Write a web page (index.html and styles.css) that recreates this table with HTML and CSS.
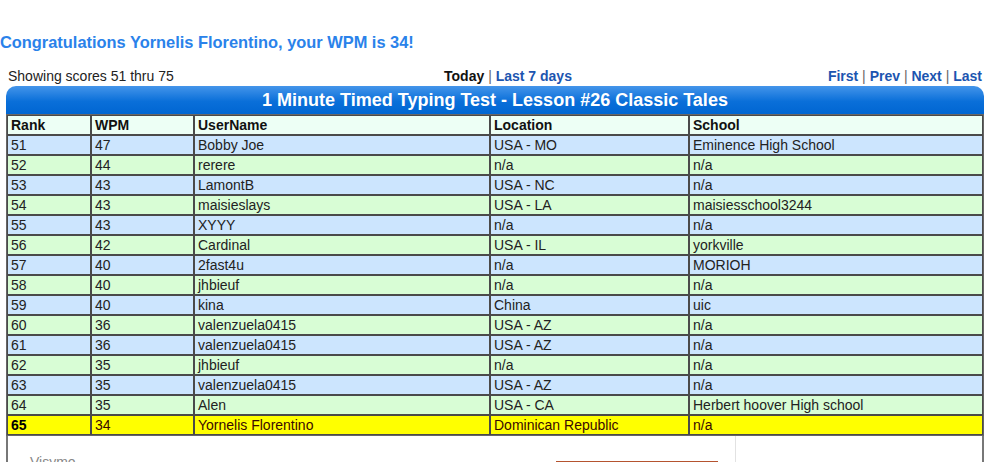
FILE: index.html
```html
<!DOCTYPE html>
<html>
<head>
<meta charset="utf-8">
<link rel="stylesheet" href="styles.css">
</head>
<body>
<h1 class="congrats">Congratulations Yornelis Florentino, your WPM is 34!</h1>
<div class="board">
  <div class="nav">
    <span class="showing">Showing scores 51 thru 75</span>
    <span class="period"><b>Today</b> <span class="sep">|</span> <a>Last 7 days</a></span>
    <span class="pager"><a>First</a> <span class="sep">|</span> <a>Prev</a> <span class="sep">|</span> <a>Next</a> <span class="sep">|</span> <a>Last</a></span>
  </div>
  <div class="bar">1 Minute Timed Typing Test - Lesson #26 Classic Tales</div>
  <table class="scores">
    <colgroup><col class="c1"><col class="c2"><col class="c3"><col class="c4"><col class="c5"></colgroup>
    <tr class="head"><th>Rank</th><th>WPM</th><th>UserName</th><th>Location</th><th>School</th></tr>
    <tr class="b"><td>51</td><td>47</td><td>Bobby Joe</td><td>USA - MO</td><td>Eminence High School</td></tr>
    <tr class="g"><td>52</td><td>44</td><td>rerere</td><td>n/a</td><td>n/a</td></tr>
    <tr class="b"><td>53</td><td>43</td><td>LamontB</td><td>USA - NC</td><td>n/a</td></tr>
    <tr class="g"><td>54</td><td>43</td><td>maisieslays</td><td>USA - LA</td><td>maisiesschool3244</td></tr>
    <tr class="b"><td>55</td><td>43</td><td>XYYY</td><td>n/a</td><td>n/a</td></tr>
    <tr class="g"><td>56</td><td>42</td><td>Cardinal</td><td>USA - IL</td><td>yorkville</td></tr>
    <tr class="b"><td>57</td><td>40</td><td>2fast4u</td><td>n/a</td><td>MORIOH</td></tr>
    <tr class="g"><td>58</td><td>40</td><td>jhbieuf</td><td>n/a</td><td>n/a</td></tr>
    <tr class="b"><td>59</td><td>40</td><td>kina</td><td>China</td><td>uic</td></tr>
    <tr class="g"><td>60</td><td>36</td><td>valenzuela0415</td><td>USA - AZ</td><td>n/a</td></tr>
    <tr class="b"><td>61</td><td>36</td><td>valenzuela0415</td><td>USA - AZ</td><td>n/a</td></tr>
    <tr class="g"><td>62</td><td>35</td><td>jhbieuf</td><td>n/a</td><td>n/a</td></tr>
    <tr class="b"><td>63</td><td>35</td><td>valenzuela0415</td><td>USA - AZ</td><td>n/a</td></tr>
    <tr class="g"><td>64</td><td>35</td><td>Alen</td><td>USA - CA</td><td>Herbert hoover High school</td></tr>
    <tr class="me"><td><b>65</b></td><td>34</td><td>Yornelis Florentino</td><td>Dominican Republic</td><td>n/a</td></tr>
  </table>
  <div class="below">
    <div class="ad">
      <span class="brand">Visymo</span>
      <div class="adbox"></div>
    </div>
    <div class="side"></div>
  </div>
</div>
</body>
</html>
```
FILE: styles.css
```css
html, body { margin: 0; padding: 0; background: #fff; }
body { font-family: "Liberation Sans", Arial, sans-serif; color: #222; }
.congrats {
  margin: 33px 0 0 0;
  font-size: 16.4px;
  line-height: 18px;
  font-weight: bold;
  color: #2a82ea;
}
.board { margin-left: 6px; width: 978px; }
.nav {
  display: flex;
  justify-content: space-between;
  align-items: center;
  height: 16px;
  margin-top: 17px;
  font-size: 14px;
  line-height: 16px;
  padding: 0 2px;
}
.showing { width: 300px; }
.period { flex: 1; text-align: center; padding-left: 26px; }
.period b { color: #111; }
.pager { width: 300px; text-align: right; font-weight: bold; }
.nav a { color: #1c55b0; font-weight: bold; }
.sep { color: #666; font-weight: normal; }
.bar {
  margin-top: 2px;
  height: 28px;
  line-height: 28px;
  border-radius: 10px 10px 0 0;
  background: linear-gradient(#4495ea, #0a6fd9 55%, #0066d2);
  color: #fff;
  font-weight: bold;
  font-size: 18px;
  text-align: center;
}
.scores {
  width: 978px;
  table-layout: fixed;
  border-collapse: separate;
  border-spacing: 0;
  border: 1px solid #666;
  font-size: 14px;
}
.c1 { width: 84px; }
.c2 { width: 103px; }
.c3 { width: 296px; }
.c4 { width: 199px; }
.c5 { width: 294px; }
.scores th, .scores td {
  border: 1px solid #4a4a4a;
  height: 18px;
  line-height: 18px;
  padding: 0 0 0 3px;
  text-align: left;
  white-space: nowrap;
  overflow: hidden;
}
.scores th { font-weight: bold; color: #111; }
.head { background: #edfff5; }
.b { background: #cce5fe; }
.g { background: #d8fdd5; }
.me { background: #ffff00; }
.me td { color: #3a0a00; }
.me b { color: #000; }
.below {
  display: flex;
  height: 40px;
  border-left: 2px solid #777;
  border-right: 2px solid #777;
}
.ad {
  width: 727px;
  border-right: 1px solid #e2e2e2;
  position: relative;
}
.brand {
  position: absolute;
  left: 22px;
  top: 18px;
  font-size: 14px;
  color: #888;
}
.adbox {
  position: absolute;
  left: 548px;
  top: 25px;
  width: 162px;
  height: 20px;
  border-top: 2px solid #b5532f;
}
.side { flex: 1; }
```
